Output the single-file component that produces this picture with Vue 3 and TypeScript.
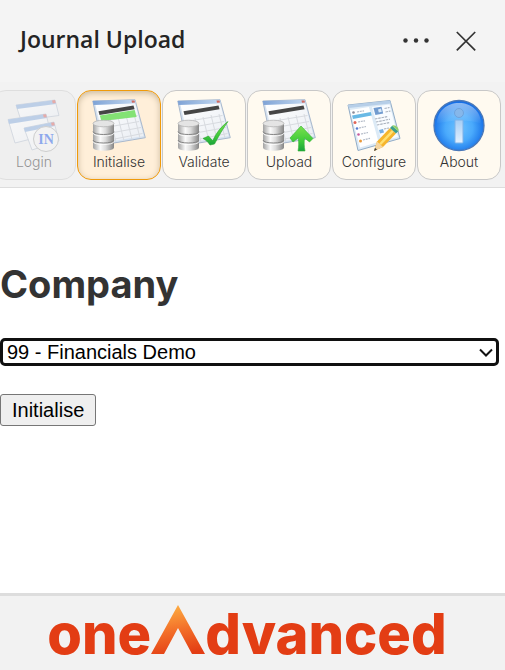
<script setup lang="ts">
import { ref } from 'vue'

type Kind = 'login' | 'initialise' | 'validate' | 'upload' | 'configure' | 'about'

interface Tool {
  kind: Kind
  label: string
  disabled?: boolean
}

const tools: Tool[] = [
  { kind: 'login', label: 'Login', disabled: true },
  { kind: 'initialise', label: 'Initialise' },
  { kind: 'validate', label: 'Validate' },
  { kind: 'upload', label: 'Upload' },
  { kind: 'configure', label: 'Configure' },
  { kind: 'about', label: 'About' },
]

const active = ref<Kind>('initialise')
const company = ref('99')

const usesSheet = (kind: Kind): boolean => ['initialise', 'validate', 'upload'].includes(kind)
</script>

<template>
  <div class="pane">
    <svg class="defs" width="0" height="0" aria-hidden="true">
      <defs>
        <linearGradient id="metal" x1="0" x2="1" y1="0" y2="0">
          <stop offset="0" stop-color="#a2a2a2" />
          <stop offset="0.35" stop-color="#fafafa" />
          <stop offset="0.6" stop-color="#dcdcdc" />
          <stop offset="1" stop-color="#858585" />
        </linearGradient>
        <linearGradient id="titlebar" x1="0" x2="1" y1="0" y2="0">
          <stop offset="0" stop-color="#7fa3d6" />
          <stop offset="1" stop-color="#c3d8f0" />
        </linearGradient>
        <linearGradient id="paper" x1="0" x2="1" y1="0" y2="1">
          <stop offset="0" stop-color="#ffffff" />
          <stop offset="1" stop-color="#e9edf3" />
        </linearGradient>
        <linearGradient id="leaf" x1="0" x2="0" y1="0" y2="1">
          <stop offset="0" stop-color="#7be04f" />
          <stop offset="0.6" stop-color="#3fcb3a" />
          <stop offset="1" stop-color="#1ba33c" />
        </linearGradient>
        <radialGradient id="ball" cx="0.5" cy="0.55" r="0.55">
          <stop offset="0" stop-color="#6cc2ff" />
          <stop offset="0.5" stop-color="#4aaafc" />
          <stop offset="1" stop-color="#1068e4" />
        </radialGradient>
        <linearGradient id="gloss" x1="0" x2="0" y1="0" y2="1">
          <stop offset="0" stop-color="#fff" stop-opacity="0.5" />
          <stop offset="1" stop-color="#fff" stop-opacity="0" />
        </linearGradient>
        <linearGradient id="stem" x1="0" x2="0" y1="0" y2="1">
          <stop offset="0" stop-color="#a6cdf4" />
          <stop offset="1" stop-color="#e3f1ff" />
        </linearGradient>
        <linearGradient id="flame" x1="0.4" x2="0.6" y1="0" y2="1">
          <stop offset="0" stop-color="#fdae42" />
          <stop offset="0.5" stop-color="#f37029" />
          <stop offset="1" stop-color="#e33d14" />
        </linearGradient>
      </defs>
    </svg>

    <header class="titlebar">
      <h1 class="title">Journal Upload</h1>
      <div class="window-actions">
        <button class="icon-button" type="button" aria-label="More options">
          <svg width="28" height="24" viewBox="0 0 28 24" fill="#333">
            <circle cx="3.500" cy="11.500" r="2.200" />
            <circle cx="14" cy="11.500" r="2.200" />
            <circle cx="24.500" cy="11.500" r="2.200" />
          </svg>
        </button>
        <button class="icon-button" type="button" aria-label="Close">
          <svg width="20" height="24" viewBox="0 0 20 24" fill="none" stroke="#333" stroke-width="1.7">
            <path d="M.8 3l18.4 18.4M19.2 3L.8 21.4" />
          </svg>
        </button>
      </div>
    </header>

    <nav class="toolbar">
      <button
        v-for="tool in tools"
        :key="tool.kind"
        type="button"
        class="tool"
        :class="{ active: active === tool.kind }"
        :disabled="tool.disabled"
        @click="active = tool.kind"
      >
        <svg class="tool-icon" viewBox="0 0 54 54" aria-hidden="true">
          <template v-if="usesSheet(tool.kind)">
            <path d="M.8 2L43 .7l10.300 38L10 46z" fill="#d7e3f1" stroke="#a9b8cc" stroke-width="1" />
            <path d="M3.500 6L43 4l8.500 33L12 43.500z" fill="url(#paper)" />
            <path d="M.8 2L43 .7l.9 3.600L1.600 6z" fill="url(#titlebar)" />
            <path d="M39.500 1.500l3 0 .5 2-3 .2z" fill="#d26a60" />
            <path d="M6.500 12.300L41.500 6.500l1.100 3.800L7.500 16z" fill="#454545" />
            <path
              d="M9 22.500L45.500 16.500M11 29L47 22.500M13 35L49 28.500M15 41.500L50.500 34.500M18 19l6 24M26 18l6 24M34 16l6 24.500M42 15l6 24"
              fill="none" stroke="#d8dbe0" stroke-width="1"
            />
            <path v-if="tool.kind === 'initialise'" d="M7.800 16.500L42.700 11l1.900 7L9.500 22z" fill="#83e274" />
            <path d="M1 24.500v24C1 52.800 22 52.800 22 48.500v-24z" fill="url(#metal)" />
            <ellipse cx="11.500" cy="24.500" rx="10.500" ry="3.300" fill="#e4e4e4" stroke="#b4b4b4" stroke-width=".8" />
            <path
              d="M1 32.500c0 4 21 4 21 0M1 41c0 4 21 4 21 0"
              fill="none" stroke="#858585" stroke-width="1"
            />
            <path d="M1 34c0 4 21 4 21 0M1 42.500c0 4 21 4 21 0" fill="none" stroke="#fff" stroke-width=".8" />
          </template>

          <path
            v-if="tool.kind === 'validate'"
            d="M26 39.500l5.500-2.500 4.200 4.800C39 34 44.500 27 51 22.500c-5 7-9.500 15-13.500 22.500L33 46c-2-3-4-5-7-6.500z"
            fill="url(#leaf)" stroke="#29a530" stroke-width=".6"
          />
          <path
            v-if="tool.kind === 'upload'"
            d="M39 27l12 12.500-3.500 3.500-5-4c-.5 4-.5 8 .5 13h-7c1-5 .8-9 .3-13l-5.300 4-3-4z"
            fill="url(#leaf)" stroke="#31b334" stroke-width=".6"
          />

          <template v-if="tool.kind === 'login'">
            <g stroke="#aab6c8" stroke-width=".8">
              <path d="M9 6L48 1l4 15.500-38 5z" fill="url(#paper)" />
              <path d="M1 20.500L39 15l5 20-36 9z" fill="url(#paper)" />
              <path d="M17 29l30-6 5 19-27 9z" fill="url(#paper)" />
            </g>
            <path d="M9 6L48 1l1 4L10 10zM1 20.500L39 15l1 4L2 25zM17 29l30-6 1 4-30 6z" fill="#8aaede" />
            <path d="M45 1.400l3-.4 .8 3-3 .4zM36 15.600l3-.4 .8 3-3 .4zM44 23.800l3-.6 .8 3-3 .6z" fill="#dc6760" />
            <circle cx="39" cy="40" r="12.500" fill="#f3f3f3" stroke="#aaa" />
            <text x="39" y="45" class="badge-text">IN</text>
          </template>

          <template v-if="tool.kind === 'configure'">
            <path d="M1 6L43 1.500l10 38L11 51.500z" fill="#dceaf6" stroke="#92acc6" stroke-width="1" />
            <path d="M1 6L43 1.500l.8 3L1.800 9z" fill="#b7cfe8" />
            <path d="M3 11l19-3 9.500 35L13 48.500z" fill="#fff" />
            <path d="M25 8l17.500-2.500L51 38l-16.500 4z" fill="#f9fcff" />
            <path d="M26.500 9l8-1.200 1.700 6.800-7.800 1.400z" fill="#719bcf" />
            <path d="M31 10.500l3-1 .8 3.200-3 .8z" fill="#d9e9f8" />
            <path d="M5 16.500L23.800 13l.9 3.500L6 20z" fill="#69b9e5" />
            <path
              d="M10 13l7-1.200M11 23l7-1.200M12 29l7-1.500M14 35l7-1.500M16 41l7-1.700"
              stroke="#b1b9c6" stroke-width="1.200" stroke-dasharray="2 .8"
            />
            <path
              d="M37.500 9.500l5-1M38.500 13l5-1M28 20l13-2.500M29 23l14-2.800M30 26l13-2.500M37 30l5-1"
              stroke="#aab2be" stroke-width="1.100" stroke-dasharray="2.500 .8"
            />
            <circle cx="8" cy="23.500" r="1.500" fill="#e16556" />
            <circle cx="10" cy="29.500" r="1.300" fill="#577dd3" />
            <circle cx="11.500" cy="35.500" r="1.300" fill="#c65a9c" />
            <circle cx="13.500" cy="42" r="1.500" fill="#e99939" />
            <circle cx="6.500" cy="13.500" r="1.300" fill="#8c8c99" />
            <path d="M32 31l4-1 1 3.500-4 1z" fill="#77aee1" />
            <path d="M27 52l3-9.500L43 29l6 5.500L36 48z" fill="#f6b52d" />
            <path d="M32.200 44.500L45 31l1.800 1.700L34 46z" fill="#ffe071" />
            <path d="M27 52l3-9.500 6 5.500z" fill="#f4d5a2" />
            <path d="M27 52l1-3.200 2 2z" fill="#3d3d3d" />
            <path d="M43 29l2.200-2.200 6 5.500L49 34.500z" fill="#3b9e8c" />
            <path d="M45.200 26.800c2-2 8 2.500 6 5.500z" fill="#92d06b" />
          </template>

          <template v-if="tool.kind === 'about'">
            <circle cx="27" cy="26.500" r="25" fill="url(#ball)" stroke="#4a78b8" stroke-width="1.300" />
            <path d="M5 25C5 12 15 4 27 4s22 8 22 21c-12-5-32-4-44 0z" fill="url(#gloss)" />
            <circle cx="27" cy="14" r="4.500" fill="#86b7ea" stroke="#6fa3dc" />
            <rect x="23" y="21" width="8" height="23" rx=".8" fill="url(#stem)" stroke="#7fb2e8" />
          </template>
        </svg>
        <span class="tool-label">{{ tool.label }}</span>
      </button>
    </nav>

    <main class="content">
      <h2 class="heading"><label for="company">Company</label></h2>
      <div class="select-wrap">
        <select id="company" v-model="company" class="select">
          <option value="99">99 - Financials Demo</option>
        </select>
        <svg class="chevron" width="14" height="10" viewBox="0 0 14 10" fill="none" stroke="#111" stroke-width="2">
          <path d="M1 1.500l6 6 6-6" />
        </svg>
      </div>
      <button class="submit" type="button">Initialise</button>
    </main>

    <footer class="footer">
      <div class="logo" role="img" aria-label="oneAdvanced">
        <span>one</span>
        <svg class="peak" width="54" height="49" viewBox="0 0 54 49" aria-hidden="true">
          <path d="M27 0L54 49H41L27 23 13 49H0z" fill="url(#flame)" />
        </svg>
        <span>dvanced</span>
      </div>
    </footer>
  </div>
</template>

<style>
body {
  margin: 0;
}
</style>

<style scoped>
.pane {
  display: flex;
  flex-direction: column;
  min-height: 100vh;
  overflow: hidden;
  background: #fff;
  color: #333;
  font-family: Inter, sans-serif;
}

.defs {
  position: absolute;
}

.titlebar {
  display: flex;
  align-items: center;
  justify-content: space-between;
  height: 82px;
  padding: 0 29px 0 20px;
  background: #f4f4f4;
}

.title {
  margin: 0;
  padding-bottom: 4px;
  color: #242424;
  font: 600 23px/32px "Open Sans", sans-serif;
}

.window-actions {
  display: flex;
  gap: 26px;
}

.icon-button {
  display: flex;
  padding: 0;
  border: 0;
  background: none;
}

.toolbar {
  display: flex;
  justify-content: flex-end;
  gap: 1px;
  padding: 8px 4px 7px 0;
  border-bottom: 1px solid #ddd;
  background: #f2f2f2;
}

.tool {
  display: flex;
  flex: none;
  flex-direction: column;
  align-items: center;
  box-sizing: border-box;
  width: 84px;
  height: 90px;
  padding: 8px 0 0;
  border: 1px solid #c8c8c8;
  border-radius: 14px;
  background: #fffaf0;
  color: #333;
  font: 300 14px/18px Inter, sans-serif;
}

.tool.active {
  border-color: #f09a0a;
  background: #ffefd9;
  box-shadow: inset 0 2px 6px #c9b89c;
}

.tool:disabled {
  border-color: #ccc;
  background: #eee;
  opacity: 0.5;
}

.tool-icon {
  width: 54px;
  height: 54px;
}

.badge-text {
  fill: #2a62e8;
  font: 700 14px "Liberation Serif", serif;
  text-anchor: middle;
}

.content {
  flex: 1;
  padding-top: 72px;
}

.heading {
  margin: 0 0 30px;
  font-size: 38px;
  font-weight: 700;
  line-height: 48px;
}

.select-wrap {
  position: relative;
  margin-right: 6px;
}

.select {
  display: block;
  box-sizing: border-box;
  width: 100%;
  height: 28px;
  padding: 0 24px 0 4px;
  appearance: none;
  border: 3px solid #101010;
  border-radius: 5px;
  outline: 0;
  background: #fff;
  color: #000;
  font: 20px/22px "Liberation Sans", sans-serif;
}

.chevron {
  position: absolute;
  top: 10px;
  right: 6px;
  pointer-events: none;
}

.submit {
  height: 32px;
  margin-top: 28px;
  padding: 0 11px;
  border: 1px solid #767676;
  border-radius: 3px;
  background: #efefef;
  color: #000;
  font: 20px/24px "Liberation Sans", sans-serif;
}

.footer {
  display: flex;
  justify-content: center;
  padding: 9px 11px 16px 0;
  border-top: 3px solid #ddd;
  background: #f2f2f2;
}

.logo {
  display: flex;
  align-items: baseline;
  height: 49px;
  color: #e33d14;
  font-size: 56px;
  font-weight: 800;
  line-height: 49px;
}
</style>
